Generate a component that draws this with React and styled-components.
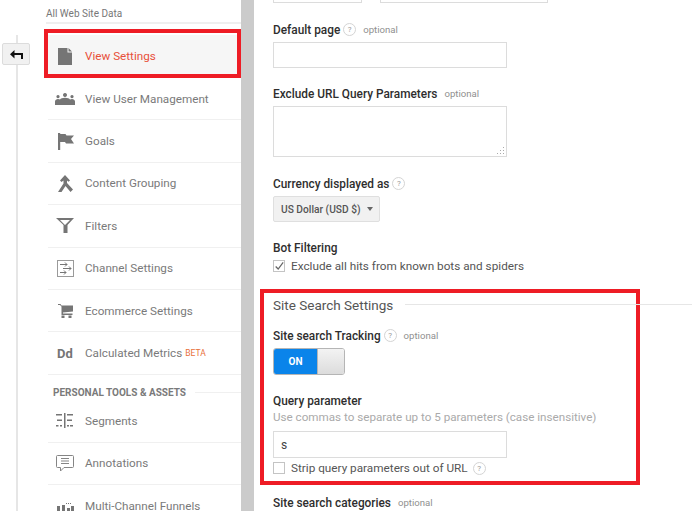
import styled, { createGlobalStyle } from 'styled-components';

const GlobalStyle = createGlobalStyle`
  html, body { margin: 0; padding: 0; background: #fff; }
  body { font-family: Roboto, "Liberation Sans", sans-serif; }
`;

const Page = styled.div`
  display: flex;
  width: 692px;
  height: 511px;
  overflow: hidden;
  background: #fff;
`;

const Rail = styled.div`
  position: relative;
  flex: 0 0 48px;
  padding-top: 43px;
  box-sizing: border-box;
  &::before {
    content: '';
    position: absolute;
    left: 16px;
    top: 35px;
    bottom: 0;
    width: 2px;
    background: #e6e6e6;
  }
`;

const BackButton = styled.div`
  position: relative;
  display: flex;
  align-items: center;
  justify-content: center;
  width: 28px;
  height: 22px;
  margin-left: 2px;
  box-sizing: border-box;
  background: #f1f1f1;
  border: 1px solid #dcdcdc;
  border-radius: 2px;
`;

const Nav = styled.nav`
  flex: 0 0 193px;
  display: flex;
  flex-direction: column;
`;

const Account = styled.div`
  height: 24px;
  line-height: 27px;
  margin-left: -2px;
  box-sizing: border-box;
  border-bottom: 2px solid #efefef;
  font-size: 10px;
  color: #777;
`;

const Item = styled.div`
  position: relative;
  flex: 0 0 auto;
  display: flex;
  align-items: center;
  height: ${p => p.$height || 42.4}px;
  margin-top: ${p => p.$top || 0}px;
  box-sizing: border-box;
  border-bottom: 1px solid #f0f0f0;
  background: ${p => (p.$active ? '#f6f6f6' : 'transparent')};
  color: ${p => (p.$active ? '#e8503a' : '#7a7a7a')};
  font-size: 11.7px;
`;

const IconSlot = styled.span`
  flex: 0 0 37px;
  display: flex;
  justify-content: center;
  padding-right: 3px;
  box-sizing: border-box;
  color: #757575;
  font-size: 13px;
  font-weight: 700;
`;

const Beta = styled.span`
  margin-left: 3px;
  font-size: 8.5px;
  color: #e8703a;
`;

const Callout = styled.div`
  position: absolute;
  left: -4px;
  right: 0;
  top: -6px;
  bottom: -1px;
  border: 4px solid #ee1c25;
  pointer-events: none;
`;

const SectionHead = styled.div`
  display: flex;
  align-items: center;
  gap: 9px;
  height: 13px;
  margin: 12px 0 2.500px 5px;
  font-size: 10px;
  font-weight: 700;
  color: #7a7a7a;
  white-space: nowrap;
  &::after {
    content: '';
    flex: 1;
    height: 1px;
    background: #f0f0f0;
  }
`;

const Divider = styled.div`
  flex: 0 0 13px;
  background: #cbcbcb;
`;

const Main = styled.main`
  flex: 1;
  padding-left: 19px;
  min-width: 0;
`;

const TopInputs = styled.div`
  display: flex;
  gap: 18px;
  height: 3px;
  overflow: hidden;
  margin-bottom: 20px;
`;

const TopInput = styled.div`
  width: ${p => p.$width}px;
  height: 3px;
  box-sizing: border-box;
  border: 1px solid #dcdcdc;
  border-top: 0;
`;

const Label = styled.div`
  display: flex;
  align-items: center;
  height: 13px;
  margin-bottom: ${p => p.$gap ?? 6}px;
  font-size: 11.85px;
  font-weight: 500;
  color: #2e2e2e;
  white-space: nowrap;
`;

const Optional = styled.span`
  margin-left: ${p => p.$left ?? 7}px;
  font-size: 9.6px;
  font-weight: 400;
  color: #8f8f8f;
`;

const Help = styled.span`
  display: inline-flex;
  align-items: center;
  justify-content: center;
  width: 13px;
  height: 13px;
  margin-left: ${p => p.$left ?? 3}px;
  box-sizing: border-box;
  border: 1px solid #d4d4d4;
  border-radius: 50%;
  font-size: 8px;
  font-weight: 400;
  color: #9a9a9a;
`;

const Field = styled.div`
  position: relative;
  display: flex;
  align-items: center;
  width: 234px;
  height: ${p => p.$height || 26}px;
  margin-bottom: ${p => p.$gap ?? 0}px;
  padding-left: 7px;
  box-sizing: border-box;
  border: 1px solid #dcdcdc;
  font-size: 12px;
  color: #444;
`;

const Grip = styled.svg`
  position: absolute;
  right: 1px;
  bottom: 1px;
`;

const Select = styled.div`
  display: flex;
  align-items: center;
  width: 107px;
  height: 26px;
  margin-bottom: 19px;
  padding-left: 7px;
  box-sizing: border-box;
  background: #f1f1f1;
  border: 1px solid #dfdfdf;
  border-radius: 2px;
  font-size: 10.2px;
  font-weight: 500;
  color: #555;
  &::after {
    content: '';
    margin-left: 6px;
    border-left: 3.5px solid transparent;
    border-right: 3.5px solid transparent;
    border-top: 4px solid #666;
  }
`;

const CheckRow = styled.div`
  display: flex;
  align-items: center;
  gap: 6px;
  height: 14px;
  font-size: 11.75px;
  color: #555;
  margin-top: ${p => p.$top || 0}px;
`;

const Box = styled.span`
  display: flex;
  align-items: center;
  justify-content: center;
  width: 12px;
  height: 12px;
  box-sizing: border-box;
  border: 1px solid #c4c4c4;
  background: #fff;
`;

const SearchBox = styled.section`
  position: relative;
  width: 380px;
  height: 196px;
  margin: 16px 0 11px -13px;
  padding: 3px 0 0 9px;
  box-sizing: border-box;
  border: 4px solid #ee1c25;
`;

const SectionTitle = styled.h2`
  margin: 0 0 15px;
  height: 18px;
  line-height: 18px;
  font-size: 13.5px;
  font-weight: 400;
  color: #555;
`;

const TitleRule = styled.span`
  position: absolute;
  left: 141px;
  right: -60px;
  top: 11px;
  height: 1px;
  background: #e6e6e6;
`;

const Toggle = styled.div`
  display: flex;
  width: 72px;
  height: 27px;
  margin-bottom: 19px;
  box-sizing: border-box;
  border: 1px solid #b5b5b5;
  border-radius: 3px;
  overflow: hidden;
`;

const ToggleOn = styled.span`
  flex: 0 0 43px;
  display: flex;
  align-items: center;
  justify-content: center;
  background: #0a84ea;
  color: #fff;
  font-size: 10px;
  font-weight: 700;
`;

const ToggleKnob = styled.span`
  flex: 1;
  background: linear-gradient(#f3f3f3, #dcdcdc);
  border-left: 1px solid #b5b5b5;
`;

const Hint = styled.div`
  height: 13px;
  margin-bottom: 8px;
  font-size: 11.65px;
  color: #aaa;
  white-space: nowrap;
`;

const NavIcon = ({ d, w, h }) => (
  <svg width={w} height={h} viewBox={`0 0 ${w} ${h}`} fill="currentColor"><path d={d} /></svg>
);

const navTop = [
  {
    label: 'View Settings',
    active: true,
    icon: <NavIcon w={14} h={17} d="M0 0h9.500v4.500H14V17H0zM10.500 0L14 3.500h-3.500z" />,
  },
  {
    label: 'View User Management',
    icon: (
      <NavIcon
        w={20}
        h={12}
        d="M3 2a1.600 1.600 0 1 0 .01 0zM10 0a2 2 0 1 0 .01 0zM17 2a1.600 1.600 0 1 0 .01 0zM0 12V8.500C0 7 1.500 6 3 6c.8 0 1.500.2 2 .6C5.600 5.500 7.500 4.800 10 4.800s4.400.7 5 1.800c.5-.4 1.200-.6 2-.6 1.500 0 3 1 3 2.500V12z"
      />
    ),
  },
  {
    label: 'Goals',
    icon: <NavIcon w={17} h={17} d="M1 0h2.200v17H1zM3.200 1h5.300l1 1.500H17l-3 3.500 3 4.500H9l-1-1.500H3.200z" />,
  },
  {
    label: 'Content Grouping',
    icon: <NavIcon w={15} h={17} d="M7 0l5 5.500-1.500 1.300L9 5.500V8l6 6.500L12.500 17 7.500 11 3.500 17H0l5.500-8.500v-3L3.500 7 2 5.500z" />,
  },
  {
    label: 'Filters',
    icon: <NavIcon w={18} h={15} d="M0 0h18l-6.500 7v8h-4V7zM4 2l5 5 5-5z" />,
  },
  {
    label: 'Channel Settings',
    icon: (
      <svg width="17" height="17" viewBox="0 0 17 17" fill="none" stroke="#757575">
        <rect x=".5" y=".5" width="16" height="16" stroke="#9a9a9a" />
        <path d="M3 4.500h7M8 2.500l2 2-2 2M14 8.500H6M12 6.500l2 2-2 2M3 12.500h6M7 10.500l2 2-2 2" />
      </svg>
    ),
  },
  {
    label: 'Ecommerce Settings',
    icon: <NavIcon w={15} h={14} d="M0 0h2.500L3.500 1.500H15v6L5 8.500V9.500h9.500V11H3.500V2.500L2 1H0zM3.500 11.500h3V14h-3zM10.500 11.500h3V14h-3z" />,
  },
  { label: 'Calculated Metrics', beta: true, icon: 'Dd' },
];

const navBottom = [
  {
    label: 'Segments',
    icon: (
      <svg width="18" height="15" viewBox="0 0 18 15" fill="#757575">
        <path d="M8 0h1.500v15H8zM0 1h6v1.500H0zM11 1h6v1.500h-6zM1 6.500h5V8H1zM11 6.500h5V8h-5zM0 12h2.500v1.500H0zM4 12h2v1.500H4zM11 12h2v1.500h-2zM14 12h3v1.500h-3z" />
      </svg>
    ),
  },
  {
    label: 'Annotations',
    icon: (
      <svg width="18" height="17" viewBox="0 0 18 17" fill="none" stroke="#858585">
        <path d="M1.500.5h15a1 1 0 0 1 1 1v10a1 1 0 0 1-1 1H8L4.500 16V12.500h-3a1 1 0 0 1-1-1v-10a1 1 0 0 1 1-1z" />
        <path d="M5 3.500h8M5 6h8M5 8.500h8" />
      </svg>
    ),
  },
];

export default function App() {
  return (
    <Page>
      <GlobalStyle />
      <Rail>
        <BackButton>
          <svg width="13" height="9" viewBox="0 0 13 9" fill="#111">
            <path d="M4.500 0v3H13v6h-2V5H4.500v3.500L0 4.200z" />
          </svg>
        </BackButton>
      </Rail>
      <Nav>
        <Account>All Web Site Data</Account>
        <Item $active $top={11} $height={43}>
          <Callout />
          <IconSlot>{navTop[0].icon}</IconSlot>
          {navTop[0].label}
        </Item>
        {navTop.slice(1).map(item => (
          <Item key={item.label}>
            <IconSlot>{item.icon}</IconSlot>
            {item.label}
            {item.beta && <Beta>BETA</Beta>}
          </Item>
        ))}
        <SectionHead>PERSONAL TOOLS &amp; ASSETS</SectionHead>
        {navBottom.map(item => (
          <Item key={item.label}>
            <IconSlot>{item.icon}</IconSlot>
            {item.label}
          </Item>
        ))}
        <Item>
          <IconSlot>
            <svg width="18" height="17" viewBox="0 0 18 17" fill="#757575">
              <path d="M1 9h3v8H1zM6 8h3v9H6zM11 11h3v6h-3zM15 9h3v8h-3zM10 6h1v1h-1zM12 6h1v1h-1zM14 6h1v1h-1z" />
            </svg>
          </IconSlot>
          Multi-Channel Funnels
        </Item>
      </Nav>
      <Divider />
      <Main>
        <TopInputs>
          <TopInput $width={89} />
          <TopInput $width={168} />
        </TopInputs>
        <Label>Default page<Help>?</Help><Optional>optional</Optional></Label>
        <Field $gap={19} />
        <Label>Exclude URL Query Parameters<Optional>optional</Optional></Label>
        <Field $height={51} $gap={20}>
          <Grip width="8" height="8" viewBox="0 0 8 8" fill="#aaa">
            <path d="M6 0h1v1H6zM6 3h1v1H6zM3 3h1v1H3zM6 6h1v1H6zM3 6h1v1H3zM0 6h1v1H0z" />
          </Grip>
        </Field>
        <Label>Currency displayed as<Help>?</Help></Label>
        <Select>US Dollar (USD $)</Select>
        <Label $gap={5}>Bot Filtering</Label>
        <CheckRow>
          <Box>
            <svg width="12" height="11" viewBox="0 0 12 11" fill="none" stroke="#666" strokeWidth="1.500">
              <path d="M2 5.500l3 3 6-8" />
            </svg>
          </Box>
          Exclude all hits from known bots and spiders
        </CheckRow>
        <SearchBox>
          <SectionTitle>Site Search Settings</SectionTitle>
          <TitleRule />
          <Label>Site search Tracking<Help>?</Help><Optional>optional</Optional></Label>
          <Toggle>
            <ToggleOn>ON</ToggleOn>
            <ToggleKnob />
          </Toggle>
          <Label $gap={3}>Query parameter</Label>
          <Hint>Use commas to separate up to 5 parameters (case insensitive)</Hint>
          <Field $height={27}>s</Field>
          <CheckRow $top={3}>
            <Box />
            <span>Strip query parameters out of URL</span>
            <Help $left={-1}>?</Help>
          </CheckRow>
        </SearchBox>
        <Label>Site search categories<Optional>optional</Optional></Label>
      </Main>
    </Page>
  );
}
